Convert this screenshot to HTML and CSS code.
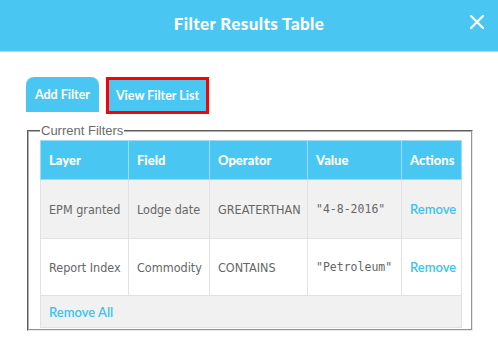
FILE: index.html
```html
<!DOCTYPE html>
<html lang="en">
<head>
    <meta charset="UTF-8">
    <title>Filter Results Table</title>
    <link rel="stylesheet" href="styles.css">
</head>
<body>
    <div class="modal">
        <div class="modal-header">
            <h1>Filter Results Table</h1>
            <button class="close" type="button" aria-label="Close">
                <svg width="14" height="14" viewBox="0 0 14 14">
                    <path d="M1 1 L13 13 M13 1 L1 13" stroke="#fff" stroke-width="2.2" stroke-linecap="square"/>
                </svg>
            </button>
        </div>

        <div class="modal-body">
            <div class="tabs">
                <button class="tab tab-active" type="button">Add Filter</button>
                <button class="tab tab-flagged" type="button">View Filter List</button>
            </div>

            <fieldset class="filters">
                <legend>Current Filters</legend>
                <table>
                    <colgroup>
                        <col style="width: 88px">
                        <col style="width: 81px">
                        <col style="width: 98px">
                        <col style="width: 94px">
                        <col style="width: 60px">
                    </colgroup>
                    <thead>
                        <tr>
                            <th>Layer</th>
                            <th>Field</th>
                            <th>Operator</th>
                            <th>Value</th>
                            <th>Actions</th>
                        </tr>
                    </thead>
                    <tbody>
                        <tr class="row-odd">
                            <td>EPM granted</td>
                            <td>Lodge date</td>
                            <td>GREATERTHAN</td>
                            <td class="value">"4-8-2016"</td>
                            <td><a href="#" class="link">Remove</a></td>
                        </tr>
                        <tr class="row-even">
                            <td>Report Index</td>
                            <td>Commodity</td>
                            <td>CONTAINS</td>
                            <td class="value">"Petroleum"</td>
                            <td><a href="#" class="link">Remove</a></td>
                        </tr>
                        <tr class="row-foot">
                            <td colspan="5"><a href="#" class="link">Remove All</a></td>
                        </tr>
                    </tbody>
                </table>
            </fieldset>
        </div>
    </div>
</body>
</html>
```

FILE: styles.css
```css
body {
    margin: 0;
    background: #fff;
    font-family: "DejaVu Sans Condensed", "DejaVu Sans", sans-serif;
}
.modal {
    width: 498px;
    height: 356px;
    background: white;
}
.modal-header {
    height: 51px;
    background-color: #4ac6f3;
    border-bottom: 1px solid #a9e1f7;
    display: flex;
    align-items: center;
    justify-content: center;
    position: relative;
}
.modal-header h1 {
    margin: 0;
    color: white;
    font-family: Lato, sans-serif;
    font-weight: 900;
    font-size: 17px;
    letter-spacing: 0.4px;
    padding-bottom: 5px;
}
.close {
    position: absolute;
    right: 14px;
    top: 15px;
    background: none;
    border: none;
    padding: 0;
    width: 14px;
    height: 14px;
    cursor: pointer;
}
.close svg {
    display: block;
}
.modal-body {
    padding: 25px 25px 0 26px;
}
.tabs {
    display: flex;
    align-items: flex-end;
    gap: 10px;
    height: 36px;
}
.tab {
    font-family: Lato, sans-serif;
    font-weight: bold;
    font-size: 12.5px;
    color: white;
    background-color: #4ac6f3;
    border: none;
    cursor: pointer;
    padding: 0;
}
.tab-active {
    width: 73px;
    height: 35px;
    border-radius: 8px 8px 0 0;
    margin-bottom: 1px;
}
.tab-flagged {
    width: 97px;
    height: 31px;
    outline: 3px solid #f00;
    margin-bottom: 2px;
}
.filters {
    margin: 10px 0 0 1px;
    width: 445px;
    height: 208px;
    box-sizing: border-box;
    border: 2px groove #d0d0d0;
    border-color: #b0b0b0 #e8e8e8 #e8e8e8 #b0b0b0;
    padding: 2px 9px 0 11px;
}
.filters legend {
    color: #6b6b6b;
    font-family: "Liberation Sans", Arial, sans-serif;
    font-size: 13px;
    padding: 0 1px;
    margin-left: 0;
}
table {
    border-collapse: collapse;
    width: 421px;
    table-layout: fixed;
}
th, td {
    text-align: left;
    padding: 0 0 0 8px;
    border: 1px solid #e2e2e2;
}
th {
    background-color: #4ac6f3;
    border-color: #9edcf5;
    color: white;
    font-family: Lato, sans-serif;
    font-weight: 900;
    font-size: 13px;
    height: 38px;
}
td {
    color: #666;
    font-size: 12.5px;
    white-space: nowrap;
}
.row-odd td {
    background: #f1f1f1;
    height: 58px;
}
.row-even td {
    background: white;
    height: 56px;
}
.row-foot td {
    background: #f1f1f1;
    height: 31px;
}
.value {
    font-family: "DejaVu Sans Mono", monospace;
    font-size: 11.5px;
}
.link {
    color: #3ec2f1;
    text-decoration: none;
    font-family: Lato, sans-serif;
    font-size: 13px;
    font-weight: 600;
}
```
